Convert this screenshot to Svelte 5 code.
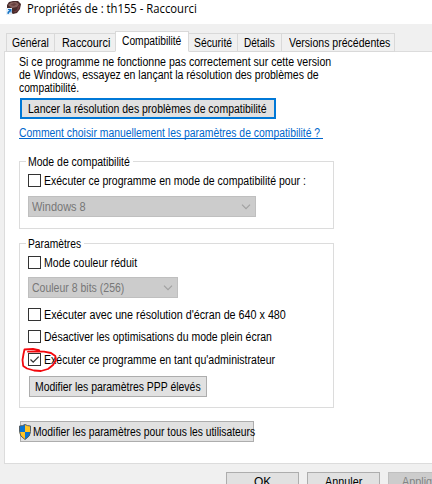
<script>
  const tabs = [
    ['Général', 49, 5, 37], ['Raccourci', 61, 7, 48], ['Compatibilité', 74, 6, 59],
    ['Sécurité', 49, 5, 38], ['Détails', 44, 6, 31], ['Versions précédentes', 113, 7, 101]
  ];
  const intro = [
    ['Si ce programme ne fonctionne pas correctement sur cette version', 312],
    ['de Windows, essayez en lançant la résolution des problèmes de', 300],
    ['compatibilité.', 60]
  ];

  // Condenses a label to the advance width of the dialog font.
  function fit(node, width) {
    const natural = node.offsetWidth;
    const inner = node.firstElementChild;
    node.style.width = width + 'px';
    inner.style.transform = `scaleX(${width / natural})`;
  }
</script>

{#snippet label(text, width)}
  <span class="label" use:fit={width}><span>{text}</span></span>
{/snippet}

{#snippet check(text, width, checked = false)}
  <div class="check">
    <span class="box">
      {#if checked}
        <svg width="11" height="11" viewBox="0 0 11 11"><path d="M1.5 5.5 4.2 8.2 9.7 2.6" fill="none" stroke="#333" stroke-width="1.3" /></svg>
      {/if}
    </span>
    {@render label(text, width)}
  </div>
{/snippet}

{#snippet select(text, width, cls)}
  <div class="select {cls}">
    {@render label(text, width)}
    <svg width="10" height="6" viewBox="0 0 10 6"><path d="M1 .7 5 4.7 9 .7" fill="none" stroke="#a0a0a0" stroke-width="1.1" /></svg>
  </div>
{/snippet}

<div class="window">
  <header>
    <svg class="app" width="16" height="16" viewBox="0 0 16 16">
      <path d="M1 5 3 2 7 1l5 0 3 3-1 5-3 4-4 1-4-3-2-3z" fill="#482b2b" />
      <path d="M2 5 5 2.5l5-.5 3 2-2 3-5 1z" fill="#87605c" />
      <path d="m4 5 4-2 3 1-3 2z" fill="#67413f" />
      <path d="m12 6 2-1-1 4-3 3-3 0 4-2z" fill="#713d40" />
      <path d="M0 8h6v7H0z" fill="#e8f2fb" />
      <path d="M1.5 14v-2l2-2H2V9h3.5v3.5h-1V11l-2 3z" fill="#1674c5" />
    </svg>
    <div class="title">{@render label('Propriétés de : th155 - Raccourci', 170)}</div>
  </header>
  <nav>
    {#each tabs as [name, width, pad, textWidth], i}
      <div class="tab" class:active={i === 2} style="width:{width}px;padding-left:{pad}px">{@render label(name, textWidth)}</div>
    {/each}
  </nav>
  <main>
    <div class="intro">
      {#each intro as [text, width]}<div>{@render label(text, width)}</div>{/each}
    </div>
    <div class="button primary">{@render label('Lancer la résolution des problèmes de compatibilité', 239)}</div>
    <div class="link">{@render label('Comment choisir manuellement les paramètres de compatibilité ?', 301)}</div>
    <section class="mode">
      <div class="legend">{@render label('Mode de compatibilité', 102)}</div>
      {@render check('Exécuter ce programme en mode de compatibilité pour :', 262)}
      {@render select('Windows 8', 54, 'wide')}
    </section>
    <section class="params">
      <div class="legend">{@render label('Paramètres', 53)}</div>
      {@render check('Mode couleur réduit', 93)}
      {@render select('Couleur 8 bits (256)', 92, 'narrow')}
      <div class="options">
        {@render check("Exécuter avec une résolution d'écran de 640 x 480", 242)}
        {@render check('Désactiver les optimisations du mode plein écran', 228)}
        {@render check("Exécuter ce programme en tant qu'administrateur", 231, true)}
        <svg class="ring" width="40" height="28" viewBox="0 0 40 28"><path d="M19 3.2 13 1.8 4.5 2.5 3.5 7 2.5 13 3.2 19 7 21.5 14 23.5 21 24 28 22 33 18 36 13 35.3 9 31 6 24 4.7 14 4.5 8 4.7" fill="none" stroke="#f3080d" stroke-width="1.8" stroke-linejoin="round" stroke-linecap="round" /></svg>
      </div>
      <div class="button dpi">{@render label('Modifier les paramètres PPP élevés', 166)}</div>
    </section>
    <div class="button all">
      <svg width="12" height="16" viewBox="0 0 12 16">
        <path d="M6 .5Q8.5 2 11.5 2v5.5q0 5-5.5 8-5.5-3-5.5-8V2Q3.5 2 6 .5z" fill="#ffc423" />
        <path d="M6 .5V8H.5V2Q3.5 2 6 .5zM6 8h5.5q-.3 4.6-5.5 7.5z" fill="#0873d1" />
        <path d="M6 .5Q8.5 2 11.5 2v5.5q0 5-5.5 8-5.5-3-5.5-8V2Q3.5 2 6 .5z" fill="none" stroke="#555f68" />
      </svg>
      {@render label('Modifier les paramètres pour tous les utilisateurs', 222)}
    </div>
  </main>
  <footer>
    <div class="button">{@render label('OK', 17)}</div>
    <div class="button">{@render label('Annuler', 37)}</div>
    <div class="button disabled">{@render label('Appliquer', 46)}</div>
  </footer>
</div>

<style>
  :global(body) { margin: 0; overflow: hidden; }
  .window, .window * { box-sizing: border-box; }
  .window { width: 432px; height: 484px; overflow: hidden; background: #f0f0f0; color: #000; font: 12px/13px "Liberation Sans", Arial, sans-serif; display: flex; flex-direction: column; }
  .label { display: inline-block; flex: none; white-space: pre; height: 13px; vertical-align: top; }
  .label span { display: inline-block; transform-origin: 0 0; vertical-align: top; }
  main .label span { line-height: 15px; }
  svg { display: block; flex: none; }
  header { height: 24px; flex: none; background: #fff; display: flex; padding-left: 6px; }
  .title { font: 12px/17px "Open Sans", sans-serif; padding-left: 5px; }
  nav { height: 27px; flex: none; display: flex; align-items: flex-end; padding-left: 6px; }
  .tab { height: 19px; flex: none; border: 1px solid #d9d9d9; border-left-width: 0; padding-top: 3px; position: relative; margin-bottom: -1px; }
  .tab:first-child { border-left-width: 1px; }
  .tab.active { height: 21px; background: #fff; border-bottom-color: #fff; z-index: 1; border-left-width: 1px; margin-left: -1px; }
  main { height: 413px; flex: none; width: 428px; margin-left: 4px; background: #fff; border: 1px solid #dcdcdc; border-right: 0; padding: 3px 0 0 14px; }
  .intro { height: 43px; }
  .intro div { height: 13px; }
  .button { border: 1px solid #adadad; background: #e1e1e1; display: flex; height: 21px; }
  .primary { width: 256px; border: 2px solid #0078d7; padding: 2px 0 0 6px; margin-left: 1px; }
  .link { color: #0066cc; width: 304px; height: 13px; margin-top: 7px; border-bottom: 1px solid #0066cc; }
  section { width: 315px; border: 1px solid #dcdcdc; padding-left: 8px; }
  .mode { height: 68px; margin-top: 22px; }
  .params { height: 165px; margin-top: 14px; }
  .legend { width: fit-content; background: #fff; height: 13px; margin: -7px 0 0 -2px; padding: 0 3px 0 2px; }
  .check { display: flex; height: 13px; gap: 3px; margin-top: 6px; }
  .box { width: 13px; height: 13px; border: 1px solid #333; background: #fff; flex: none; }
  .select { height: 21px; border: 1px solid #bfbfbf; background: #ccc; color: #777; display: flex; justify-content: space-between; padding: 3px 4px 0 3px; margin-top: 9px; }
  .select svg { margin-top: 4px; }
  .wide { width: 228px; }
  .narrow { width: 150px; margin-top: 8px; }
  .options { position: relative; margin-top: 10px; display: flex; flex-direction: column; gap: 9px; }
  .options .check { margin: 0; }
  .options .check:last-of-type { margin-top: 1px; }
  .ring { position: absolute; left: -8px; top: 39px; }
  .dpi { width: 178px; margin: 10px 0 0 1px; padding: 3px 0 0 5px; }
  .all { width: 234px; margin: 13px 0 0 1px; padding-top: 3px; }
  .all svg { margin: -1px 2px 0 -2px; }
  footer { display: flex; gap: 8px; padding: 8px 0 0 226px; }
  footer .button { width: 73px; height: 22px; flex: none; justify-content: center; padding-top: 3px; }
  footer .disabled { background: #ccc; border-color: #bfbfbf; color: #838383; }
</style>
